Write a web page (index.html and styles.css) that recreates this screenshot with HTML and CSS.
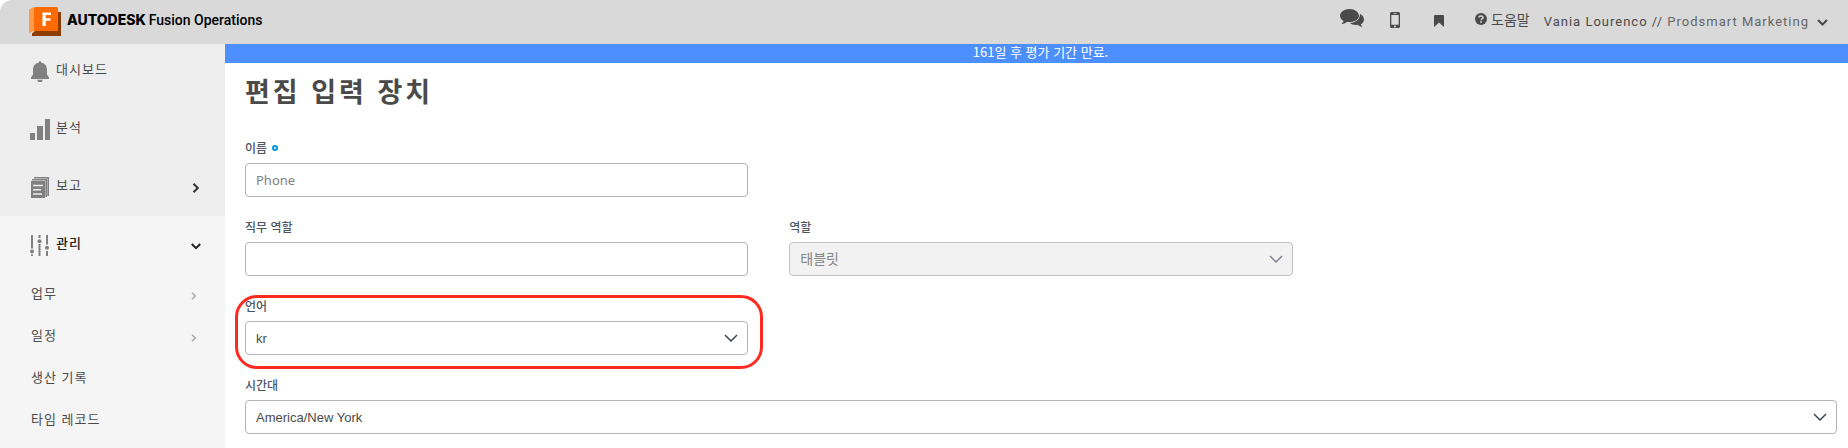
FILE: index.html
```html
<!DOCTYPE html>
<html lang="ko">
<head>
<meta charset="utf-8">
<title>편집 입력 장치</title>
<link rel="stylesheet" href="styles.css">
</head>
<body>
<div class="app">
  <header class="topbar">
    <a class="brand" href="#">
      <svg class="brand-logo" width="32" height="30" viewBox="0 0 32 30" aria-hidden="true">
        <path fill="#ff9a4d" d="M0 2.500 5 0v24L0 26z"/>
        <path fill="#8f3c00" d="M29 5h3v24H3v-2.500L6 24h23z"/>
        <path fill="#ff6b00" d="M5 1.500Q5 0 6.500 0h21Q29 0 29 1.500V24H5z"/>
        <path fill="#fff" d="M13.500 5.500H22V8h-5.300v3.300h4.800v2.500h-4.800V19h-3.200z"/>
      </svg>
      <span class="brand-name">AUTODESK</span>
      <span class="brand-product">Fusion Operations</span>
    </a>
    <div class="tools">
      <button class="tool tool-chat" type="button" aria-label="채팅">
        <svg width="24" height="19" viewBox="0 0 24 19" fill="currentColor" aria-hidden="true">
          <path d="M9.500 0C4.300 0 0 3 0 6.800c0 2.200 1.400 4.100 3.500 5.300-.4 1.300-1.100 2-2 2.900 2.200-.2 3.900-.9 5.300-2.100.9.200 1.800.2 2.700.2 5.300 0 9.500-2.800 9.500-6.300S14.800 0 9.500 0z"/>
          <path d="M20 4.800c.3 5.200-4.100 9-10.300 9.300 1.500 1.200 3.700 1.900 6.100 1.900.7 0 1.400-.1 2-.2 1.300 1.300 2.700 2 4.600 2.200-.8-.8-1.300-1.600-1.500-2.700 1.900-1 3.100-2.600 3.100-4.500 0-2.500-1.500-4.600-4-6z"/>
        </svg>
      </button>
      <button class="tool tool-phone" type="button" aria-label="모바일">
        <svg width="10" height="16" viewBox="0 0 10 16" aria-hidden="true">
          <path fill="currentColor" fill-rule="evenodd" d="M1.500 0h7Q10 0 10 1.500v13Q10 16 8.500 16h-7Q0 16 0 14.500v-13Q0 0 1.500 0zM1.300 3v9.800h7.400V3zM3.500 1.200v.7h3v-.7zM5 13.600a.9.900 0 1 0 .1 0z"/>
        </svg>
      </button>
      <button class="tool tool-mark" type="button" aria-label="북마크">
        <svg width="10" height="12" viewBox="0 0 10 12" aria-hidden="true"><path fill="currentColor" d="M1 0h8q1 0 1 1v11L5 7.500 0 12V1q0-1 1-1z"/></svg>
      </button>
      <a class="help" href="#">
        <svg width="12" height="12" viewBox="0 0 12 12" aria-hidden="true">
          <circle cx="6" cy="6" r="6" fill="currentColor"/>
          <path d="M4 4.600C4 2.600 8 2.400 8 4.700c0 1.300-1.900 1.200-1.900 2.500" fill="none" stroke="#d9d9d9" stroke-width="1.500"/>
          <rect x="5.200" y="8.200" width="1.700" height="1.600" fill="#d9d9d9"/>
        </svg>
        도움말
      </a>
      <button class="account" type="button">
        <span>Vania Lourenco // <span class="company">Prodsmart Marketing</span></span>
        <svg width="11" height="7" viewBox="0 0 11 7" aria-hidden="true"><path d="M1 1l4.500 4.500L10 1" fill="none" stroke="currentColor" stroke-width="2"/></svg>
      </button>
    </div>
  </header>

  <div class="body">
    <nav class="sidebar">
      <div class="nav-main">
        <a class="nav-item" href="#">
          <svg class="nav-icon" width="20" height="21" viewBox="0 0 20 21" fill="currentColor" aria-hidden="true">
            <path d="M10 0q1 0 1.200 1.500C15 2.300 17 5 17 9v4.500l2 3V18H1v-1.500l2-3V9c0-4 2-6.700 5.800-7.500Q9 0 10 0zM7 18.800h6L11.500 21h-3z"/>
          </svg>
          <span>대시보드</span>
        </a>
        <a class="nav-item" href="#">
          <svg class="nav-icon" width="20" height="21" viewBox="0 0 20 21" fill="currentColor" aria-hidden="true">
            <path d="M0 14h5v7H0zM7 7h6v14H7zM15 0h5v21h-5z"/>
          </svg>
          <span>분석</span>
        </a>
        <a class="nav-item" href="#">
          <svg class="nav-icon" width="20" height="21" viewBox="0 0 20 21" aria-hidden="true">
            <path fill="currentColor" d="M1 4h14v17H1zM2 2h15v18h-1.600V3.500H2zM4 0h15v19h-1.600V1.500H4z"/>
            <path stroke="#eee" stroke-width="1.500" d="M3 8.500h10M3 12.700h8M3 17h9"/>
          </svg>
          <span>보고</span>
          <svg class="nav-arrow" width="10" height="10" viewBox="0 0 10 10" aria-hidden="true"><path d="M2.500.8 6.800 5 2.500 9.200" fill="none" stroke="#333" stroke-width="2"/></svg>
        </a>
      </div>
      <div class="nav-open">
        <a class="nav-item nav-current" href="#">
          <svg class="nav-icon" width="20" height="21" viewBox="0 0 20 21" fill="none" stroke="currentColor" stroke-width="2" aria-hidden="true">
            <path d="M2 0v13.500M2 19.500V21M9.500 0v3M9.500 9v12M17 0v9.500M17 16v5"/>
            <g fill="currentColor" stroke="none"><circle cx="2" cy="16.500" r="2"/><circle cx="9.500" cy="6.200" r="2"/><circle cx="17" cy="12.700" r="2"/></g>
          </svg>
          <span>관리</span>
          <svg class="nav-arrow" width="10" height="10" viewBox="0 0 10 10" aria-hidden="true"><path d="M.8 3 5 7.200 9.200 3" fill="none" stroke="#222" stroke-width="2"/></svg>
        </a>
        <a class="sub-item" href="#">업무
          <svg class="sub-arrow" width="10" height="8" viewBox="0 0 10 8" aria-hidden="true"><path d="M1 .7 4.300 4 1 7.300" fill="none" stroke="#aaa" stroke-width="1.500"/></svg>
        </a>
        <a class="sub-item" href="#">일정
          <svg class="sub-arrow" width="10" height="8" viewBox="0 0 10 8" aria-hidden="true"><path d="M1 .7 4.300 4 1 7.300" fill="none" stroke="#aaa" stroke-width="1.500"/></svg>
        </a>
        <a class="sub-item" href="#">생산 기록</a>
        <a class="sub-item" href="#">타임 레코드</a>
      </div>
    </nav>

    <main class="main">
      <p class="banner">161일 후 평가 기간 만료.</p>
      <h1 class="title">편집 입력 장치</h1>
      <form class="form">
        <div class="field">
          <label class="label" for="name">이름 <i class="required"></i></label>
          <input class="control" id="name" type="text" placeholder="Phone">
        </div>
        <div class="field field-start">
          <label class="label" for="job">직무 역할</label>
          <input class="control" id="job" type="text">
        </div>
        <div class="field">
          <label class="label" for="role">역할</label>
          <div class="select">
            <select class="control" id="role" disabled><option>태블릿</option></select>
            <svg class="chevron chevron-off" width="14" height="8" viewBox="0 0 14 8" aria-hidden="true"><path d="M1 1l6 6 6-6" fill="none" stroke="currentColor" stroke-width="1.500"/></svg>
          </div>
        </div>
        <div class="field field-start field-marked">
          <label class="label" for="lang">언어</label>
          <div class="select">
            <select class="control" id="lang"><option>kr</option></select>
            <svg class="chevron" width="14" height="8" viewBox="0 0 14 8" aria-hidden="true"><path d="M1 1l6 6 6-6" fill="none" stroke="currentColor" stroke-width="1.500"/></svg>
          </div>
        </div>
        <div class="field field-wide">
          <label class="label" for="zone">시간대</label>
          <div class="select">
            <select class="control" id="zone"><option>America/New York</option></select>
            <svg class="chevron" width="14" height="8" viewBox="0 0 14 8" aria-hidden="true"><path d="M1 1l6 6 6-6" fill="none" stroke="currentColor" stroke-width="1.500"/></svg>
          </div>
        </div>
      </form>
    </main>
  </div>
</div>
</body>
</html>
```
FILE: styles.css
```css
* { box-sizing: border-box; }

body {
  margin: 0;
  background: #fff;
  color: #4a4a4a;
  font-family: "Noto Sans", "Noto Sans CJK KR", sans-serif;
  font-size: 13px;
}

a { color: inherit; text-decoration: none; }

button {
  padding: 0;
  border: 0;
  background: none;
  color: inherit;
  font: inherit;
}

svg { display: block; flex: none; }

.app {
  display: flex;
  flex-direction: column;
  min-height: 100vh;
}

.topbar {
  display: flex;
  align-items: center;
  justify-content: space-between;
  height: 44px;
  padding: 0 20px 0 29px;
  border-top-left-radius: 12px;
  background: #d9d9d9;
}

.brand {
  display: flex;
  align-items: center;
  color: #000;
  line-height: 20px;
  padding-bottom: 4px;
}

.brand-logo { margin: 4px 6px 0 0; }

.brand-name {
  margin-right: 3px;
  font-family: Inter, sans-serif;
  font-size: 14px;
  font-weight: 800;
}

.brand-product {
  font-family: Roboto, sans-serif;
  font-size: 14px;
  font-weight: 500;
}

.tools {
  display: flex;
  align-items: center;
  color: #4a4a4a;
}

.tool-chat { margin-right: 26px; padding-bottom: 8px; }
.tool-phone { margin-right: 34px; padding-bottom: 4px; }
.tool-mark { margin-right: 31px; padding-bottom: 3px; }

.help {
  display: flex;
  align-items: center;
  gap: 4px;
  margin-right: 14px;
  padding-bottom: 6px;
  font-family: "Noto Sans CJK KR", sans-serif;
  font-size: 14px;
  line-height: 20px;
}

.account {
  display: flex;
  align-items: center;
  gap: 8px;
  font-family: Roboto, sans-serif;
  letter-spacing: 1px;
  line-height: 20px;
}

.company { color: #666; }

.body { display: flex; flex: 1; }

.sidebar {
  display: flex;
  flex: none;
  flex-direction: column;
  width: 225px;
  background: #f5f5f5;
  font-family: "Noto Sans CJK KR", sans-serif;
  letter-spacing: 1px;
}

.nav-main {
  display: flex;
  flex-direction: column;
  gap: 6px;
  padding-bottom: 4px;
  background: #eee;
}

.nav-open { padding-top: 2px; }

.nav-item {
  display: flex;
  align-items: center;
  gap: 6px;
  height: 52px;
  padding: 0 24px 4px 30px;
}

.nav-icon { margin-top: 7px; color: #808080; }
.nav-arrow { margin: 7px 0 0 auto; }

.nav-current {
  margin-bottom: 3px;
  color: #222;
  font-weight: 500;
}

.sub-item {
  display: flex;
  align-items: center;
  height: 42px;
  padding: 0 24px 4px 31px;
}

.sub-arrow { margin: 7px 0 0 auto; }

.main { flex: 1; min-width: 0; }

.banner {
  height: 19px;
  margin: 0;
  padding-left: 8px;
  background: #4d8fff;
  color: #fff;
  font-family: "Noto Sans CJK KR", sans-serif;
  line-height: 16px;
  text-align: center;
}

.title {
  margin: 11px 20px 31px;
  font-family: "Noto Sans CJK KR", sans-serif;
  font-size: 27px;
  font-weight: 700;
  letter-spacing: 3px;
  line-height: 34px;
}

.form {
  display: grid;
  grid-template-columns: repeat(3, 1fr);
  gap: 21px 41px;
  padding: 0 11px 14px 20px;
}

.field { display: flex; flex-direction: column; gap: 7px; }
.field-start { grid-column-start: 1; }
.field-wide { grid-column: 1 / -1; }
.field-marked { position: relative; }

.field-marked::after {
  content: "";
  position: absolute;
  inset: -2px -15px -14px -10px;
  border: 3px solid #ff2a1f;
  border-radius: 22px;
  pointer-events: none;
}

.label {
  display: flex;
  align-items: center;
  gap: 5px;
  color: #4b5563;
  font-family: "Noto Sans CJK KR", sans-serif;
  font-size: 12px;
  font-weight: 500;
  line-height: 17px;
}

.required {
  width: 6px;
  height: 6px;
  border: 2px solid #0696d7;
  border-radius: 50%;
}

.control {
  display: block;
  width: 100%;
  height: 34px;
  padding: 0 10px;
  border: 1px solid #b3b3bd;
  border-radius: 4px;
  background: #fff;
  color: #4a4a4a;
  font-family: "Liberation Sans", "Noto Sans CJK KR", sans-serif;
  font-size: 13px;
  appearance: none;
}

.control::placeholder {
  color: #808080;
  font-family: "Noto Sans", sans-serif;
}

.control:disabled {
  border-color: #c4c4c8;
  background: #f2f2f2;
  color: #858585;
  font-size: 14px;
  opacity: 1;
}

.select { position: relative; }

.chevron {
  position: absolute;
  top: 13px;
  right: 10px;
  color: #3c4353;
  pointer-events: none;
}

.chevron-off { color: #80838f; }
```
